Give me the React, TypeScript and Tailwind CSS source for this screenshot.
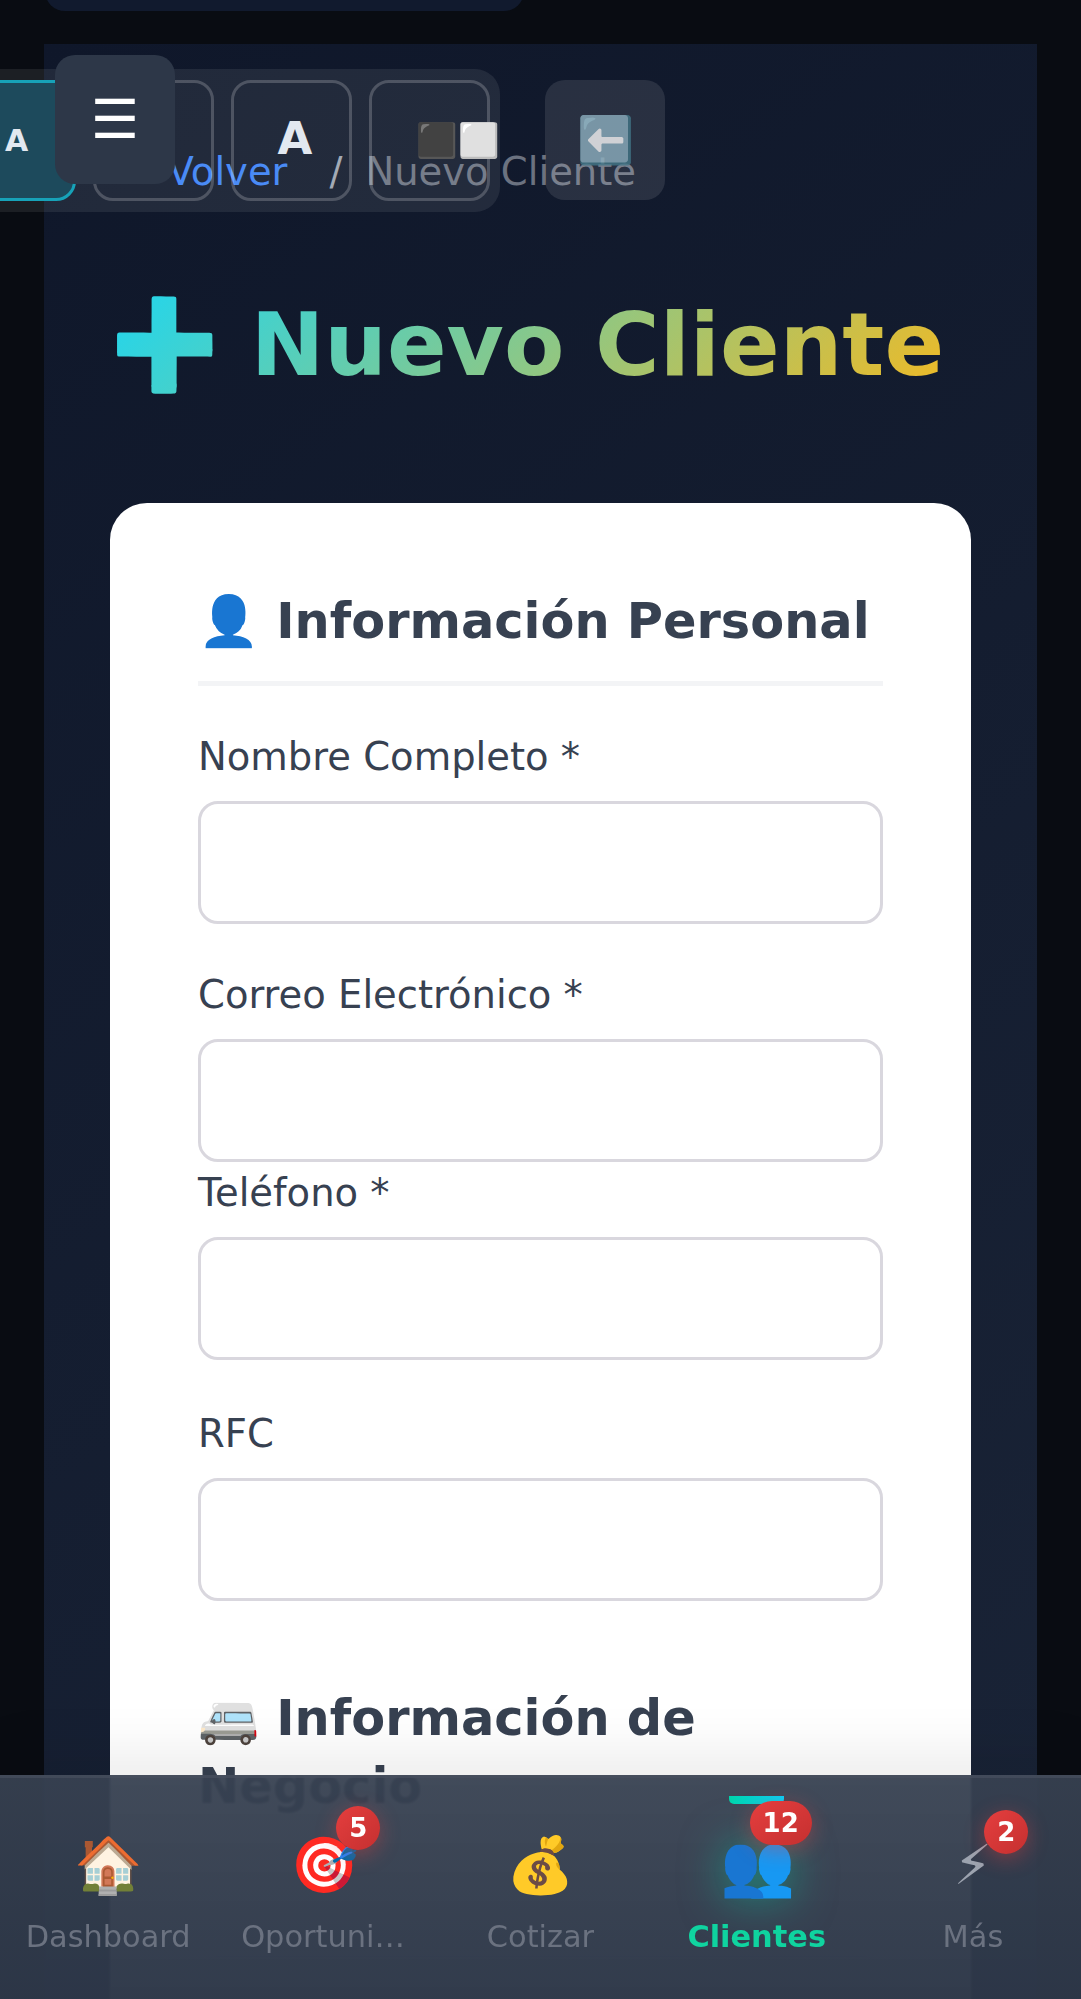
const F = "font-['DejaVu_Sans',sans-serif]";

function Field({ label, className = "" }: { label: string; className?: string }) {
  return (
    <div className={className}>
      <label className="block h-[60px] mb-[14px] text-[38.5px] leading-[60px] text-[#374151]">{label}</label>
      <div className="h-[123px] rounded-[20px] border-[3px] border-[#d9d7de] bg-white" />
    </div>
  );
}

const items = [
  { icon: "🏠", label: "Dashboard" },
  { icon: "🎯", label: "Oportunidades", badge: "5", pos: "right-[-22px] top-[-22px] min-w-[44px]" },
  { icon: "💰", label: "Cotizar" },
  { icon: "👥", label: "Clientes", badge: "12", active: true, pos: "right-[-21px] top-[-27px] min-w-[62px]" },
  { icon: "⚡", label: "Más", badge: "2", bolt: true, pos: "right-[-36px] top-[-18px] min-w-[44px]" },
];

export default function App() {
  return (
    <div className={`${F} relative h-[1999px] w-[1081px] overflow-hidden bg-[#090c12]`}>
      {/* previous block */}
      <div className="absolute left-[45px] top-[-20px] h-[31px] w-[479px] rounded-b-[20px] bg-[#111a2e]" />

      {/* main column */}
      <div className="absolute left-[44px] top-[44px] h-[2000px] w-[993px] bg-linear-[145deg,#0f172a,#1a2437]">
        <div className="flex items-center pl-[79px] pt-[99px] text-[38.5px] leading-[57px]">
          <span className="text-[#3b82f6]">← Volver</span>
          <span className="ml-[42px] mr-[23px] text-[#9ca3af]">/</span>
          <span className="text-[#6b7280]">Nuevo Cliente</span>
        </div>
        <h1 className="mt-[92px] ml-[66px] text-[88px] font-bold leading-[106px] whitespace-nowrap">
          <span className="bg-linear-[135deg,#1fd6f0,#f0ba25] bg-clip-text text-transparent">➕ Nuevo Cliente</span>
        </h1>

        <div className="mx-[66px] mt-[105px] h-[1600px] rounded-[37px] bg-white px-[88px] pt-[83px]">
          <h2 className="text-[49.4px] font-bold leading-[70px] text-[#374151]">👤 Información Personal</h2>
          <div className="mt-[25px] h-[5px] bg-[#f3f4f6]" />
          <div className="mt-[41px]">
            <Field label="Nombre Completo *" />
            <Field label="Correo Electrónico *" className="mt-[41px]" />
            <Field label="Teléfono *" className="mt-[1px]" />
            <Field label="RFC" className="mt-[44px]" />
          </div>
          <h2 className="mt-[83px] text-[49.4px] font-bold leading-[68px] text-[#374151]">🚐 Información de Negocio</h2>
          <div className="mt-[22px] h-[5px] bg-[#f3f4f6]" />
          <div className="mt-[108px] h-[122px] rounded-[20px] border-[3px] border-[#d9d7de] bg-white" />
        </div>
      </div>

      {/* toolbar */}
      <div className="absolute left-[-56px] top-[69px] flex h-[143px] w-[556px] items-center gap-[17px] rounded-[25px] bg-white/8 px-[11px]">
        <div className="flex h-[121px] w-[121px] shrink-0 items-center justify-center rounded-[20px] border-[3px] border-[#17a2b8] bg-[#1d4a5c] pl-[2px] text-[30px] font-bold text-[#e2e8f0]">A</div>
        <div className="h-[121px] w-[121px] shrink-0 rounded-[20px] border-[3px] border-white/20" />
        <div className="flex h-[121px] w-[121px] shrink-0 items-center justify-center rounded-[20px] border-[3px] border-white/20 pb-[4px] pl-[7px] text-[45px] font-bold text-[#e2e8f0]">A</div>
        <div className="relative h-[121px] w-[121px] shrink-0 rounded-[20px] border-[3px] border-white/20">
          <span className="absolute left-[44px] top-[28px] text-[33.5px] leading-[60px] whitespace-nowrap">⬛⬜</span>
        </div>
      </div>
      <div className="absolute left-[545px] top-[80px] flex h-[120px] w-[120px] items-center justify-center rounded-[20px] bg-white/10 text-[46px]">
        <span className="opacity-80">⬅️</span>
      </div>
      <div className="absolute left-[55px] top-[55px] flex h-[129px] w-[120px] items-center justify-center rounded-[20px] bg-[#2d3748] text-[54px] text-white">☰</div>

      {/* bottom nav */}
      <div className="absolute bottom-0 left-0 right-0 h-[224px] border-t-[3px] border-white/10 bg-gradient-to-b from-[#374151]/95 to-[#2d3748]/98 shadow-[0_-25px_50px_rgba(0,0,0,0.07)] backdrop-blur-[1px]">
        <div className="grid h-full grid-cols-5">
          {items.map((it) => (
            <div key={it.label} className="relative flex min-w-0 flex-col items-center px-[25px] pt-[50px]">
              {it.active && (
                <div className="absolute left-[80px] top-[18px] h-[8px] w-[55px] rounded-b-[5px] bg-gradient-to-r from-[#00d4aa] to-[#00d4ff]" />
              )}
              <div className="relative">
                <span
                  className={`block text-[55px] leading-[75px] ${it.bolt ? "text-[#9ca3af]" : ""} ${it.active ? "scale-110 drop-shadow-[0_0_20px_rgba(0,212,170,0.5)]" : ""}`}
                >
                  {it.icon}
                </span>
                {it.badge && (
                  <span className={`absolute flex h-[44px] items-center justify-center rounded-full bg-gradient-to-br from-[#e53e3e] to-[#c53030] text-[26px] font-bold leading-none text-white shadow-[0_5px_20px_rgba(229,62,62,0.4)] ${it.pos}`}>
                    {it.badge}
                  </span>
                )}
              </div>
              <span
                className={`mt-[11px] w-full truncate text-center text-[30.4px] leading-[45px] ${it.active ? "font-bold text-[#10d4a0]" : "text-[#6b7280]"}`}
              >
                {it.label}
              </span>
            </div>
          ))}
        </div>
      </div>
    </div>
  );
}
